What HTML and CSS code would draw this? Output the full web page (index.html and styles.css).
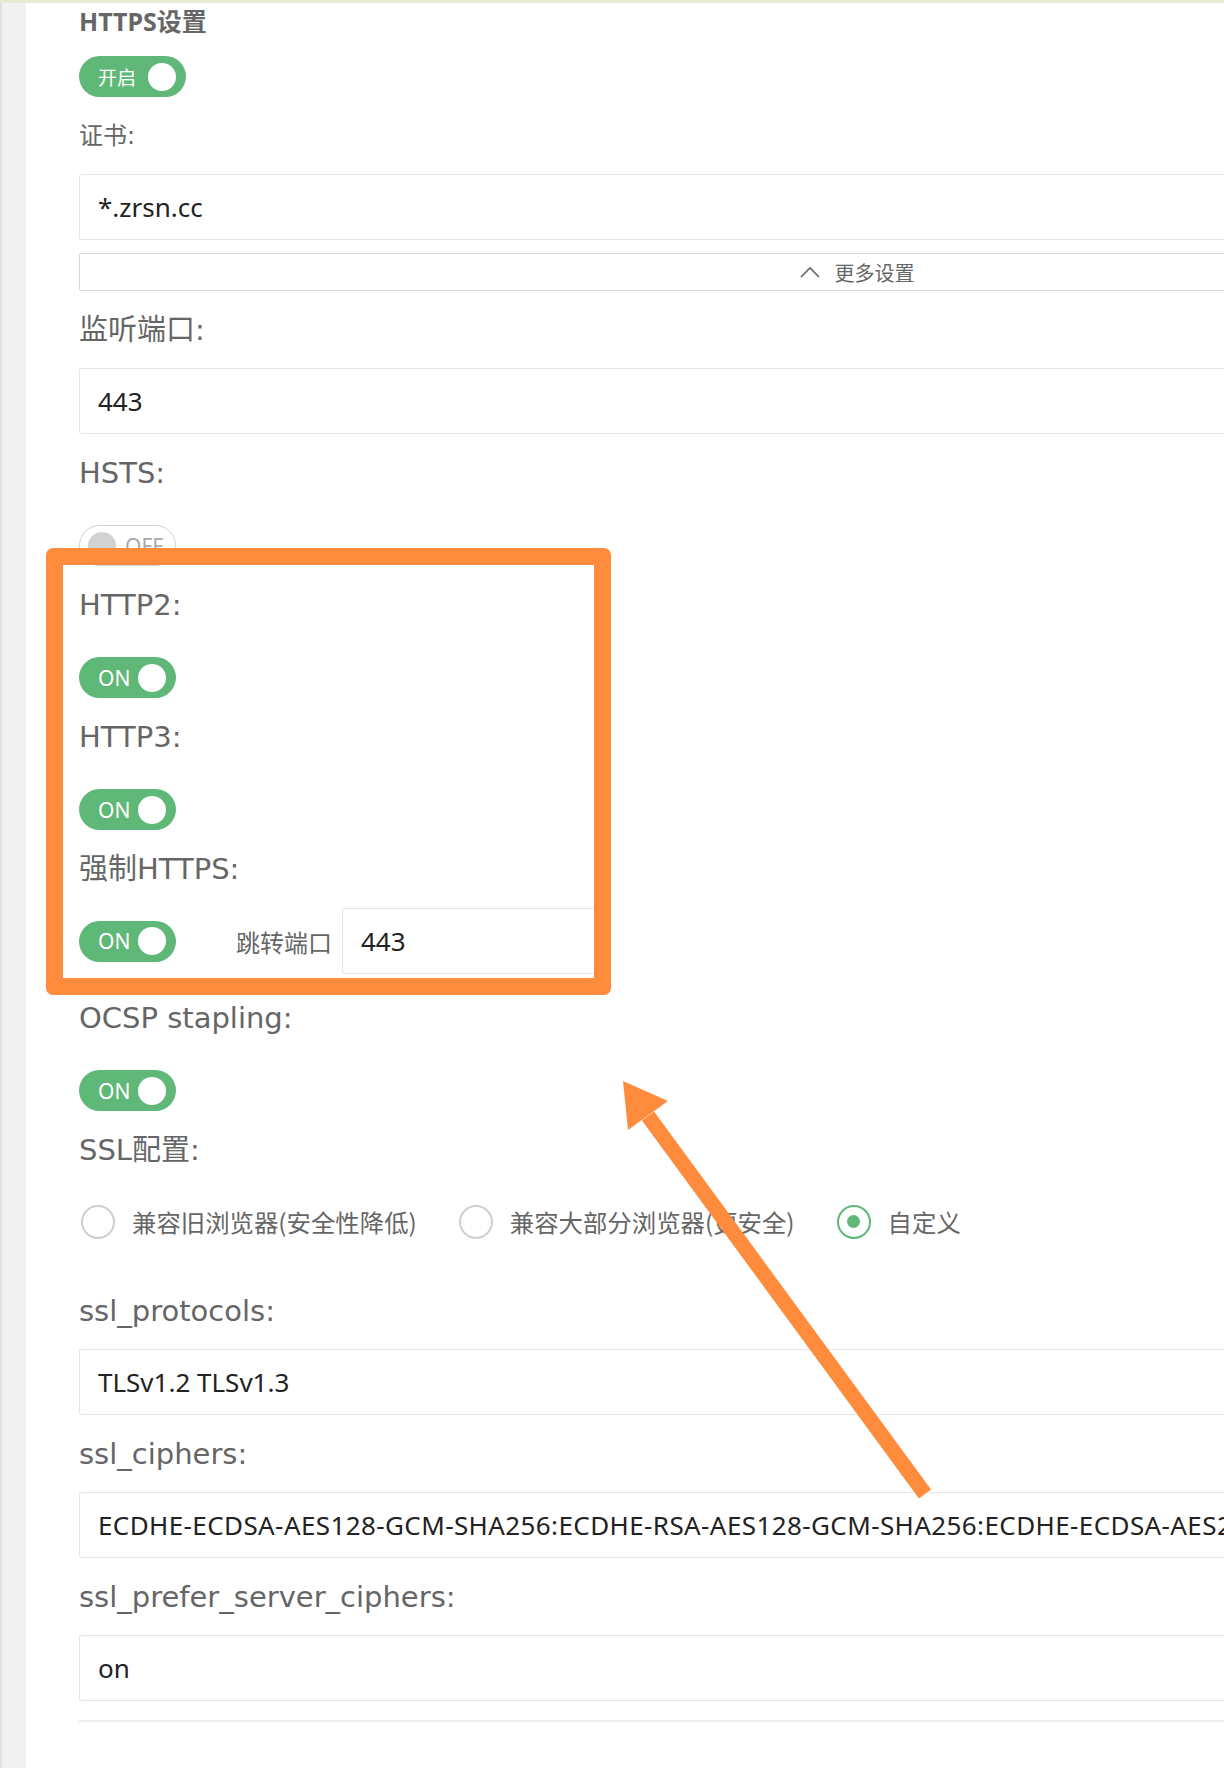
FILE: index.html
```
<!DOCTYPE html>
<html lang="zh-CN">
<head>
    <meta charset="UTF-8">
    <meta name="viewport" content="width=device-width, initial-scale=1.0">
    <title>HTTPS设置</title>
    <link rel="stylesheet" href="styles.css">
</head>
<body>
    <div class="page">
        <div class="side"></div>
        <div class="main">
            <div class="form">
                <h3 class="title">HTTPS设置</h3>
                <div class="switch switch-cn"><span>开启</span><i class="knob"></i></div>

                <div class="label label-sm">证书:</div>
                <div class="input input-cert">*.zrsn.cc</div>
                <div class="more">
                    <svg width="20" height="12" viewBox="0 0 20 12"><polyline points="1,11 10,2 19,11" fill="none" stroke="#666" stroke-width="1.6"/></svg>
                    <span>更多设置</span>
                </div>

                <div class="field">
                    <div class="label">监听端口:</div>
                    <div class="input">443</div>
                </div>

                <div class="field">
                    <div class="label">HSTS:</div>
                    <div class="switch switch-off"><i class="knob"></i><span>OFF</span></div>
                </div>

                <div class="field">
                    <div class="label">HTTP2:</div>
                    <div class="switch"><span>ON</span><i class="knob"></i></div>
                </div>

                <div class="field">
                    <div class="label">HTTP3:</div>
                    <div class="switch"><span>ON</span><i class="knob"></i></div>
                </div>

                <div class="field">
                    <div class="label">强制HTTPS:</div>
                    <div class="row">
                        <div class="switch"><span>ON</span><i class="knob"></i></div>
                        <span class="jump-label">跳转端口</span>
                        <div class="input input-port">443</div>
                    </div>
                </div>

                <div class="field field-after-row">
                    <div class="label">OCSP stapling:</div>
                    <div class="switch"><span>ON</span><i class="knob"></i></div>
                </div>

                <div class="field">
                    <div class="label">SSL配置:</div>
                    <div class="radios">
                        <div class="radio"><i class="radio-dot"></i><span>兼容旧浏览器(安全性降低)</span></div>
                        <div class="radio"><i class="radio-dot"></i><span>兼容大部分浏览器(更安全)</span></div>
                        <div class="radio on"><i class="radio-dot"></i><span>自定义</span></div>
                    </div>
                </div>

                <div class="field">
                    <div class="label">ssl_protocols:</div>
                    <div class="input">TLSv1.2 TLSv1.3</div>
                </div>

                <div class="field">
                    <div class="label">ssl_ciphers:</div>
                    <div class="input input-long">ECDHE-ECDSA-AES128-GCM-SHA256:ECDHE-RSA-AES128-GCM-SHA256:ECDHE-ECDSA-AES256-GCM-SHA384:ECDHE-RSA-AES256-GCM-SHA384</div>
                </div>

                <div class="field">
                    <div class="label">ssl_prefer_server_ciphers:</div>
                    <div class="input">on</div>
                </div>

                <div class="foot"></div>
            </div>
        </div>
    </div>

    <!-- 标注：橙色框和箭头 -->
    <div class="mark-box"></div>
    <svg class="mark-arrow" width="1224" height="1768" viewBox="0 0 1224 1768">
        <line x1="925" y1="1494" x2="648" y2="1116" stroke="#fe8c3c" stroke-width="15"/>
        <polygon points="623,1081 668,1101 628,1130" fill="#fe8c3c"/>
    </svg>
</body>
</html>
```

FILE: styles.css
```
* {
    box-sizing: border-box;
}

html, body {
    margin: 0;
}

body {
    border-top: 3px solid #e9e9d8;
    overflow: hidden;
    background: #fff;
    font-family: "DejaVu Sans", "Noto Sans CJK SC", sans-serif;
    color: #666;
}

.page {
    display: flex;
    min-height: 1765px;
}

.side {
    flex: none;
    width: 26px;
    background: #f0f0f0;
    border-left: 2px solid #e0e0e0;
}

.main {
    flex: none;
    padding-left: 53px;
}

.form {
    width: 1556px;
}

.title {
    margin: 6px 0 0;
    font: 700 25px/24px "Noto Sans", "Noto Sans CJK SC", sans-serif;
    color: #666;
}

/* 标签 */
.label {
    font-size: 29px;
    line-height: 30px;
}

.label-sm {
    margin-top: 27px;
    font-size: 24px;
    line-height: 24px;
}

.field {
    margin-top: 24px;
}

.field-after-row {
    margin-top: 29px;
}

/* 输入框 */
.input {
    display: flex;
    align-items: center;
    height: 66px;
    padding-left: 18px;
    border: 1px solid #e6e6e6;
    border-radius: 2px;
    background: #fff;
    font: 26px "Noto Sans", "Noto Sans CJK SC", sans-serif;
    color: #222;
    white-space: nowrap;
    overflow: hidden;
}

.input-long {
    letter-spacing: 0.4px;
}

.label + .input {
    margin-top: 23px;
}

.label + .input-cert {
    margin-top: 26px;
}

.more {
    display: flex;
    align-items: center;
    justify-content: center;
    gap: 15px;
    height: 38px;
    margin-top: 13px;
    border: 1px solid #d6d6d6;
    border-radius: 2px;
    font: 20px "Noto Sans CJK SC", sans-serif;
    color: #666;
}

/* 开关 */
.switch {
    display: flex;
    align-items: center;
    justify-content: space-between;
    width: 97px;
    height: 41px;
    padding: 0 10px 0 19px;
    border-radius: 21px;
    background: #5fb878;
    color: #fff;
    font: 21px "Noto Sans", "Noto Sans CJK SC", sans-serif;
}

.label + .switch {
    margin-top: 37px;
}

.switch-cn {
    width: 107px;
    margin-top: 23px;
    font-size: 19px;
}

.knob {
    width: 28px;
    height: 28px;
    border-radius: 50%;
    background: #fff;
}

.switch-off {
    justify-content: flex-start;
    gap: 9px;
    padding: 0 0 0 8px;
    border: 1px solid #d2d2d2;
    background: #fff;
    color: #aaa;
}

.switch-off .knob {
    background: #d2d2d2;
}

.row {
    display: flex;
    align-items: center;
    height: 66px;
    margin-top: 24px;
}

.jump-label {
    margin-left: 60px;
    font: 24px "Noto Sans CJK SC", sans-serif;
    color: #666;
}

.input-port {
    width: 265px;
    margin-left: 10px;
}

/* 单选 */
.radios {
    display: flex;
    align-items: center;
    margin-top: 39px;
    padding: 0 0 33px 2px;
}

.radio {
    display: flex;
    align-items: center;
    margin-right: 42px;
    font: 24.4px "Noto Sans CJK SC", sans-serif;
    color: #666;
}

.radio-dot {
    display: flex;
    align-items: center;
    justify-content: center;
    width: 34px;
    height: 34px;
    margin-right: 17px;
    border: 2px solid #cfcfcf;
    border-radius: 50%;
}

.radio.on .radio-dot {
    border-color: #5fb878;
}

.radio.on .radio-dot::after {
    content: "";
    width: 13px;
    height: 13px;
    border-radius: 50%;
    background: #5fb878;
}

.foot {
    margin-top: 19px;
    border-top: 2px solid #eee;
}

/* 标注 */
.mark-box {
    position: absolute;
    left: 46px;
    top: 548px;
    width: 565px;
    height: 447px;
    border: 17px solid #fe8c3c;
    border-radius: 7px;
}

.mark-arrow {
    position: absolute;
    left: 0;
    top: 0;
    pointer-events: none;
}
```
